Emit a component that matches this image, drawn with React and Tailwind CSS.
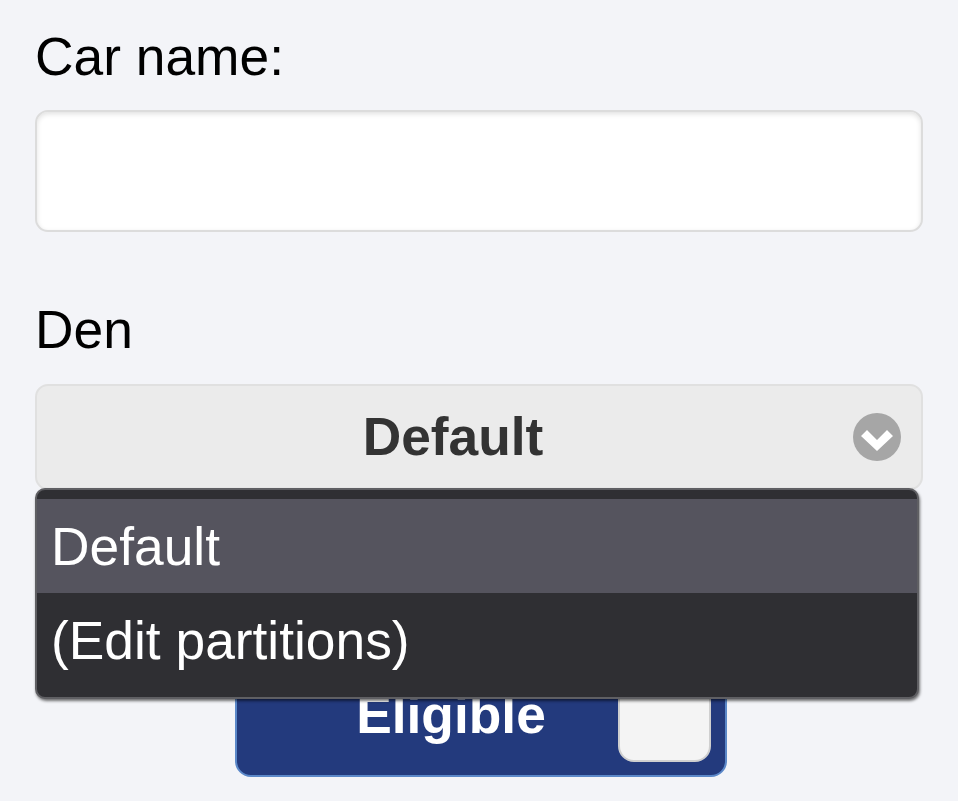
const options = [
  { label: "Default", active: true },
  { label: "(Edit partitions)", active: false },
];

export default function App() {
  return (
    <div className="min-h-[801px] bg-[#f3f4f8] px-[35px] pt-[27px] font-['Liberation_Sans',Arial,sans-serif] text-black">
      <label className="block text-[53.33px] leading-[60px]">Car name:</label>
      <input
        type="text"
        className="mt-[23px] block h-[122px] w-[888px] rounded-[13px] border-[2px] border-[#dcdcdc] bg-white shadow-[inset_0_2px_5px_rgba(0,0,0,0.12)] outline-none"
      />

      <label className="mt-[68px] block text-[53.33px] leading-[60px]">Den</label>

      <div className="relative mt-[24px] w-[888px]">
        <div className="relative flex h-[106px] items-center justify-center rounded-[13px] border-[2px] border-[#e0e0e0] bg-[#ebebeb] pr-[52px] text-[53.33px] font-bold text-[#333333]">
          Default
          <span className="absolute right-[20px] top-[27px] flex h-[48px] w-[48px] items-center justify-center rounded-full bg-[#a6a6a6]">
            <svg width="48" height="48" viewBox="0 0 48 48">
              <polygon fill="#ffffff" points="8,23 14,17 24,27 34,17 40,23 24,38" />
            </svg>
          </span>
        </div>

        <div className="absolute left-0 top-[104px] z-10 w-[884px] overflow-hidden rounded-[10px] border-[2px] border-[#5f5f63] bg-[#2f2f33] pt-[9px] shadow-[1px_2px_3px_rgba(0,0,0,0.55)]">
          {options.map((o) => (
            <div
              key={o.label}
              className={
                "flex h-[94px] items-center pl-[14px] pt-[2px] text-[53.33px] text-white " +
                (o.active ? "bg-[#55545e]" : "bg-[#2f2f33]")
              }
            >
              {o.label}
            </div>
          ))}
          <div className="h-[10px]" />
        </div>
      </div>

      <div className="ml-[200px] mt-[181px] flex h-[106px] w-[492px] items-start rounded-[16px] border-2 border-[#5b88c9] bg-[#233a7d]">
        <span className="mt-[12px] w-[428px] text-center text-[53.33px] leading-[60px] font-bold text-white">Eligible</span>
        <span className="ml-[-47px] h-[89px] w-[93px] rounded-[16px] border-2 border-[#cfcfcf] bg-[#f4f4f4]" />
      </div>
    </div>
  );
}
